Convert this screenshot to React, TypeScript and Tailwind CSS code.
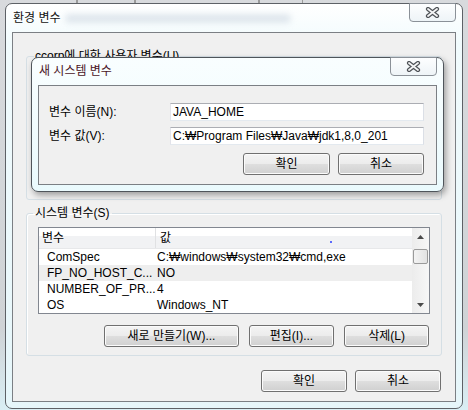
import React from 'react'

const CloseX = () => (
  <svg width="15" height="11" viewBox="0 0 15 11">
    <path d="M3 2 L12 9 M12 2 L3 9" stroke="#4e5257" strokeWidth="4.2" strokeLinecap="round" />
    <path d="M3 2 L12 9 M12 2 L3 9" stroke="#f3f4f5" strokeWidth="1.8" strokeLinecap="round" />
  </svg>
)

const CloseButton = () => (
  <div className="-mt-px w-[47px] h-[19px] rounded-b-[4px] border border-[#8b9198] bg-[linear-gradient(180deg,#fdfeff,#eef4f7)] flex items-center justify-center">
    <CloseX />
  </div>
)

const Btn = ({ label, w }: { label: string; w: string }) => (
  <div
    className={`${w} h-[22px] rounded-[3px] border border-[#707070] bg-[linear-gradient(180deg,#f4f4f4_0%,#ececec_48%,#dedede_52%,#d0d0d0_100%)] shadow-[inset_0_0_0_1px_#fbfbfb] flex items-center justify-center leading-none`}
  >
    {label}
  </div>
)

const Arrow = ({ down }: { down?: boolean }) => (
  <svg width="7" height="4" viewBox="0 0 7 4">
    <path d={down ? 'M0 0 L7 0 L3.5 4 Z' : 'M0 4 L7 4 L3.5 0 Z'} fill="#4a4a4a" />
  </svg>
)

const rows = [
  { name: 'ComSpec', value: 'C:₩windows₩system32₩cmd,exe', alt: false },
  { name: 'FP_NO_HOST_C...', value: 'NO', alt: true },
  { name: 'NUMBER_OF_PR...', value: '4', alt: false },
  { name: 'OS', value: 'Windows_NT', alt: false },
]

const App = () => {
  return (
    <div className="relative w-[468px] h-[410px] overflow-hidden bg-[linear-gradient(180deg,#d8dadd_0%,#cfd3d6_80%,#d9eef4_100%)] pl-[5px] pt-[3px] text-[12px] text-black font-['Liberation_Sans','Noto_Sans_CJK_KR',sans-serif]">
      {/* desktop behind the window */}
      <div className="absolute top-0 left-0 w-full h-[3px] flex">
        <div className="w-[78px] border-r-2 border-[#9a9a9a]" />
        <div className="w-[58px] border-r-2 border-[#9a9a9a]" />
        <div className="w-[124px] border-r-2 border-[#9a9a9a]" />
        <div className="w-[43px] border-r border-[#9a9a9a]" />
      </div>

      {/* 환경 변수 window */}
      <div className="relative w-[458px] h-[406px] rounded-[7px] border border-[#5d6166] bg-[linear-gradient(180deg,#ffffff_0%,#f1fbfd_10%,#e6f6fa_100%)] px-[6px] pb-[6px] flex flex-col">
        <div className="h-[28px] flex items-start">
          <span className="pl-px mt-[6px] leading-[16px] text-[12px] text-[#111]">환경 변수</span>
          <div className="ml-[4px] mt-[10px] w-[226px] h-[9px] rounded-full bg-[#c3cfdb] opacity-50 blur-[3px]" />
          <div className="flex-1" />
          <CloseButton />
        </div>

        <div className="flex-1 border border-[#7b7f84] bg-[#f0f0f0] flex flex-col">
          {/* user variables group (mostly covered) */}
          <fieldset className="mt-[15px] mx-[13px] h-[152px] border border-[#d5dfe5] rounded-[3px] p-0">
            <legend className="ml-[7px] px-[1px] leading-[16px]">ccorp에 대한 사용자 변수(U)</legend>
          </fieldset>

          {/* system variables group */}
          <fieldset className="mt-[5px] mx-[13px] h-[151px] border border-[#d5dfe5] rounded-[3px] p-0 shadow-[inset_1px_1px_0_#ffffff]">
            <legend className="ml-[6px] px-[2px] leading-[16px]">시스템 변수(S)</legend>

            <div className="relative mt-[6px] ml-[11px] w-[392px] h-[87px] border border-[#828790] bg-white flex overflow-hidden">
              <div className="flex-1 flex flex-col">
                <div className="h-[25px] flex bg-[linear-gradient(180deg,#ffffff_0%,#ffffff_40%,#f1f2f4_40%,#f1f2f4_100%)] border-b border-[#e7e8ea]">
                  <div className="w-[117px] border-r border-[#e0e1e3] pl-[3px] flex items-center">변수</div>
                  <div className="flex-1 pl-[4px] flex items-center">값</div>
                </div>
                {rows.map((r) => (
                  <div key={r.name} className={`h-[16px] flex leading-[16px] ${r.alt ? 'bg-[#eeeeee]' : 'bg-white'}`}>
                    <div className="w-[117px] pl-[8px] whitespace-nowrap">{r.name}</div>
                    <div className="flex-1 pl-[1px] whitespace-nowrap">{r.value}</div>
                  </div>
                ))}
              </div>
              <div className="absolute left-[291px] top-[13px] w-[2px] h-[2px] rounded-full bg-[#2a3cff]" />
              <div className="w-[17px] bg-[linear-gradient(90deg,#ececec,#f7f7f7)] flex flex-col items-center">
                <div className="h-[17px] flex items-center justify-center">
                  <Arrow />
                </div>
                <div className="mt-[4px] w-[15px] h-[15px] rounded-[2px] border border-[#9a9a9a] bg-[linear-gradient(90deg,#f3f3f3,#e2e2e2)]" />
                <div className="flex-1" />
                <div className="h-[17px] flex items-center justify-center">
                  <Arrow down />
                </div>
              </div>
            </div>

            <div className="mt-[11px] ml-[11px] w-[392px] pr-px flex justify-end gap-[10px]">
              <Btn label="새로 만들기(W)..." w="w-[135px]" />
              <Btn label="편집(I)..." w="w-[85px]" />
              <Btn label="삭제(L)" w="w-[85px]" />
            </div>
          </fieldset>

          <div className="mt-[14px] mr-[14px] flex justify-end gap-[8px]">
            <Btn label="확인" w="w-[86px]" />
            <Btn label="취소" w="w-[86px]" />
          </div>
        </div>
      </div>

      {/* 새 시스템 변수 dialog, on top */}
      <div className="absolute left-[31px] top-[57px] w-[413px] h-[135px] rounded-[7px] border border-[#4f555b] bg-[linear-gradient(180deg,#f9feff_0%,#eafafd_100%)] px-[6px] pb-[6px] flex flex-col shadow-[2px_3px_6px_rgba(0,0,0,0.35)]">
        <div className="h-[27px] flex items-start justify-between">
          <span className="pl-px mt-[5px] leading-[16px] text-[#4a1426]">새 시스템 변수</span>
          <CloseButton />
        </div>
        <div className="flex-1 border border-[#7b7f84] bg-[#f0f0f0] pl-[10px] pr-[12px] pt-[17px] flex flex-col">
          <div className="h-[18px] flex items-center">
            <div className="w-[121px]">변수 이름(N):</div>
            <div className="flex-1 h-[18px] border border-[#abadb3] border-l-[#e2e3ea] border-r-[#dbdfe6] border-b-[#e3e9ef] bg-white pl-[2px] leading-[16px]">JAVA_HOME</div>
          </div>
          <div className="mt-[6px] h-[18px] flex items-center">
            <div className="w-[121px]">변수 값(V):</div>
            <div className="flex-1 h-[18px] border border-[#abadb3] border-l-[#e2e3ea] border-r-[#dbdfe6] border-b-[#e3e9ef] bg-white pl-[2px] leading-[16px] whitespace-nowrap">C:₩Program Files₩Java₩jdk1,8,0_201</div>
          </div>
          <div className="mt-[8px] flex justify-end gap-[8px]">
            <Btn label="확인" w="w-[87px]" />
            <Btn label="취소" w="w-[86px]" />
          </div>
        </div>
      </div>
    </div>
  )
}

export default App
